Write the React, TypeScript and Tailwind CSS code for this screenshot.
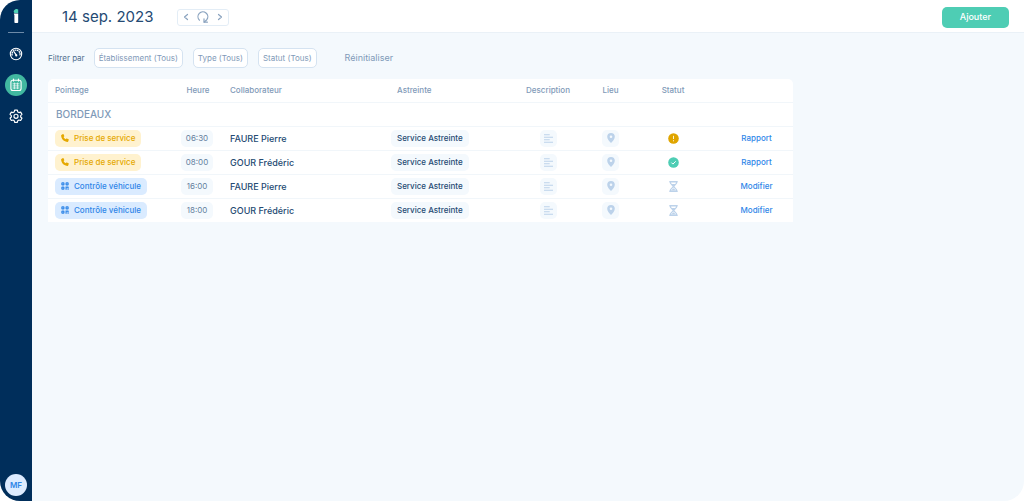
import React, { useState } from "react";

type Status = "warning" | "done" | "pending";

interface Shift {
  id: number;
  kind: "service" | "vehicle";
  time: string;
  name: string;
  onCall: string;
  status: Status;
  action: string;
}

const shifts: Shift[] = [
  { id: 1, kind: "service", time: "06:30", name: "FAURE Pierre", onCall: "Service Astreinte", status: "warning", action: "Rapport" },
  { id: 2, kind: "service", time: "08:00", name: "GOUR Frédéric", onCall: "Service Astreinte", status: "done", action: "Rapport" },
  { id: 3, kind: "vehicle", time: "16:00", name: "FAURE Pierre", onCall: "Service Astreinte", status: "pending", action: "Modifier" },
  { id: 4, kind: "vehicle", time: "18:00", name: "GOUR Frédéric", onCall: "Service Astreinte", status: "pending", action: "Modifier" },
];

const filters = ["Établissement (Tous)", "Type (Tous)", "Statut (Tous)"];

const Logo = () => (
  <svg width="8" height="16" viewBox="0 0 8 16">
    <path d="M2 2.6C2.8 1 5 .6 6.2 1.6V5H2.6C1.6 4.600 1.500 3.400 2 2.600Z" fill="#4fd1b5" />
    <path d="M1.800 5.600H6.200V14.200a.8.8 0 0 1-.8.8H3.200a.8.8 0 0 1-.8-.8V7.200Z" fill="#fff" />
  </svg>
);

const GaugeIcon = () => (
  <svg width="14" height="14" viewBox="0 0 14 14" fill="none" stroke="#fff" strokeLinecap="round">
    <circle cx="7" cy="7" r="5.7" strokeWidth="1.1" />
    <path d="M3.3 8.6a4 4 0 1 1 7.4 0" strokeWidth="1.3" strokeDasharray="1.6 .5" strokeLinecap="butt" />
    <path d="M5.2 5 7.3 8.2" strokeWidth="1.3" />
    <circle cx="7.3" cy="8.4" r="1.1" fill="#fff" stroke="none" />
  </svg>
);

const CalendarIcon = () => (
  <svg width="12" height="14" viewBox="0 0 12 14" fill="none" stroke="#fff" strokeLinecap="round">
    <rect x=".9" y="2.3" width="10.2" height="10.2" rx="2" strokeWidth="1.1" />
    <path d="M3.5 1v2M8.5 1v2" strokeWidth="1.2" />
    <path d="M3 5.8h6M3 7.9h6M3 10h6M4.4 5v5.8M7.6 5v5.8" strokeWidth=".7" />
  </svg>
);

const SettingsIcon = () => (
  <svg width="14" height="14" viewBox="0 0 24 24" fill="none" stroke="#fff" strokeWidth="2" strokeLinejoin="round">
    <path d="M9.7 2h4.6l.7 3 2 1.2 3-.9 2.2 3.9-2.2 2.1v2.4l2.2 2.1-2.2 3.9-3-.9-2 1.2-.7 3H9.7l-.7-3-2-1.2-3 .9-2.2-3.9L4 13.7v-2.4L1.8 9.2 4 5.3l3 .9L9 5Z" />
    <circle cx="12" cy="12.5" r="3.5" />
  </svg>
);

const RefreshIcon = () => (
  <svg width="12" height="12" viewBox="0 0 12 12" fill="none" stroke="#8aa3bf" strokeWidth="1.2" strokeLinecap="round" strokeLinejoin="round">
    <path d="M2.400 9.200A4.900 4.900 0 1 1 9.800 8.700L7.300 11" />
    <path d="M7 7.800v3.400h3.400" />
  </svg>
);

const ChevronIcon = ({ flip = false }: { flip?: boolean }) => (
  <svg width="6" height="8" viewBox="0 0 6 8" fill="none" stroke="#8aa3bf" strokeWidth="1.2" strokeLinecap="round" strokeLinejoin="round">
    <path d={flip ? "M1.5 1.5 4.5 4 1.5 6.5" : "M4.5 1.5 1.5 4 4.5 6.5"} />
  </svg>
);

const PhoneIcon = () => (
  <svg width="8" height="8" viewBox="0 0 8 8" fill="#e5a800">
    <path d="M.4.9 1.9.1c.3-.1.5 0 .6.2l.8 1.6c.1.2 0 .4-.1.6l-.7.6c.4.9 1.2 1.7 2.2 2.2l.6-.7c.2-.2.4-.2.6-.1l1.6.7c.3.1.4.4.3.6l-.6 1.7c-.1.3-.3.4-.5.4C3 7.9.1 5 .1 1.3.1 1.1.2 1 .4.9Z" />
  </svg>
);

const GridIcon = () => (
  <svg width="8" height="8" viewBox="0 0 8 8" fill="none" stroke="#2f86e8" strokeWidth="1.2">
    <rect x=".9" y=".9" width="2" height="2" rx=".4" />
    <rect x="5.1" y=".9" width="2" height="2" rx=".4" />
    <rect x=".9" y="5.1" width="2" height="2" rx=".4" />
    <path d="M4.5 5.1H7.500M5.100 5v2.700M7.100 5v1.200M6.500 7.200h1.200" />
  </svg>
);

const TextIcon = () => (
  <svg width="9" height="9" viewBox="0 0 9 9" stroke="#bcd2ea" strokeWidth="1.1">
    <path d="M0 .7h5.700M0 3.200h9M0 5.700h5.700M0 8.200h9" />
  </svg>
);

const PinIcon = () => (
  <svg width="8" height="10" viewBox="0 0 8 10">
    <path fillRule="evenodd" fill="#bcd2ea" d="M4 0a3.8 3.8 0 0 1 3.8 3.8C7.800 6 5.500 8.600 4 10 2.500 8.600.2 6 .2 3.800A3.800 3.800 0 0 1 4 0Zm0 2.500a1.300 1.300 0 1 0 0 2.600 1.300 1.300 0 0 0 0-2.600Z" />
  </svg>
);

const StatusIcon = ({ status }: { status: Status }) => {
  if (status === "warning") {
    return (
      <svg width="11" height="11" viewBox="0 0 11 11">
        <circle cx="5.5" cy="5.5" r="5.3" fill="#e0a500" />
        <path d="M5.5 2.8v3.2M5.5 7.2v1.1" stroke="#fff3d0" strokeWidth="1" />
      </svg>
    );
  }
  if (status === "done") {
    return (
      <svg width="11" height="11" viewBox="0 0 11 11">
        <circle cx="5.5" cy="5.5" r="5.3" fill="#4ecdb4" />
        <path d="m3.400 5.600 1.500 1.500 2.800-2.800" fill="none" stroke="#fff" strokeWidth="1" />
      </svg>
    );
  }
  return (
    <svg width="9" height="11" viewBox="0 0 9 11" fill="none" stroke="#bcd2ea">
      <path d="M.3.8h8.400M.3 10.200h8.400" strokeWidth="1.500" />
      <path d="M1.500 1v1.300L4.500 5.500l3-3.200V1M1.500 10V8.700L4.500 5.500l3 3.200V10" strokeWidth="1.200" />
      <path d="M2.500 3h4L4.500 5.200ZM2 9.500 4.500 7.300 7 9.500Z" fill="#bcd2ea" stroke="none" />
    </svg>
  );
};

const KindBadge = ({ kind }: { kind: Shift["kind"] }) =>
  kind === "service" ? (
    <span className="inline-flex h-[17px] items-center gap-[5px] rounded-[5px] bg-[#fff2cf] px-1.5 font-medium text-[#e5a800]">
      <PhoneIcon />
      Prise de service
    </span>
  ) : (
    <span className="inline-flex h-[17px] items-center gap-[5px] rounded-[5px] bg-[#daebff] px-1.5 font-medium text-[#2f86e8]">
      <GridIcon />
      Contrôle véhicule
    </span>
  );

const Sidebar = () => (
  <aside className="flex w-8 shrink-0 flex-col items-center bg-[#002e5b] pt-2 pb-[5px]">
    <Logo />
    <div className="mt-2 h-px w-4 bg-[#6d8aa8]" />
    <nav className="mt-2.5 flex flex-col items-center gap-[9px]">
      <a href="#dashboard" aria-label="Tableau de bord" className="flex size-[22px] items-center justify-center rounded-full">
        <GaugeIcon />
      </a>
      <a href="#planning" aria-label="Planning" className="flex size-[22px] items-center justify-center rounded-full bg-[#41b8a0]">
        <CalendarIcon />
      </a>
      <a href="#settings" aria-label="Paramètres" className="flex size-[22px] items-center justify-center rounded-full">
        <SettingsIcon />
      </a>
    </nav>
    <button className="mt-auto flex size-[22px] items-center justify-center rounded-full bg-[#dcebff] text-[8px] font-semibold text-[#2f86e8]">
      MF
    </button>
  </aside>
);

const Header = ({ onRefresh }: { onRefresh: () => void }) => (
  <header className="flex h-[33px] items-center border-b border-[#eaf1f7] bg-white pt-0.5 pr-[15px] pl-[30px]">
    <h1 className="text-[15px] text-[#254a73]">14 sep. 2023</h1>
    <div className="ml-6 flex h-[17px] items-center gap-2 rounded-[3px] border border-[#e3edf6] px-[5px]">
      <button aria-label="Jour précédent">
        <ChevronIcon />
      </button>
      <button aria-label="Aujourd'hui" onClick={onRefresh}>
        <RefreshIcon />
      </button>
      <button aria-label="Jour suivant">
        <ChevronIcon flip />
      </button>
    </div>
    <button className="ml-auto h-[21px] rounded-[5px] bg-[#4ecdb4] px-[18px] text-[9px] font-medium text-white">
      Ajouter
    </button>
  </header>
);

const App: React.FC = () => {
  const [active, setActive] = useState<string | null>(null);

  return (
    <div className="min-h-screen bg-white font-['Inter',sans-serif]">
      <div className="flex min-h-screen overflow-hidden rounded-l-[20px] rounded-br-[20px] bg-[#f4f9fd]">
        <Sidebar />
        <div className="min-w-0 flex-1">
          <Header onRefresh={() => setActive(null)} />
          <main className="px-4 pt-[15px]">
            <div className="flex items-center text-[8px] text-[#7f9ab8]">
              <span className="mr-[9px] text-[#50708f]">Filtrer par</span>
              <div className="flex gap-2.5">
                {filters.map((filter) => (
                  <button
                    key={filter}
                    aria-pressed={active === filter}
                    onClick={() => setActive(filter)}
                    className="h-5 rounded-[5px] border border-[#d5e3f1] bg-white px-1"
                  >
                    {filter}
                  </button>
                ))}
              </div>
              <button onClick={() => setActive(null)} className="ml-7 text-[9px]">
                Réinitialiser
              </button>
            </div>

            <table className="mt-[11px] w-full max-w-[745px] table-fixed overflow-hidden rounded-t-[5px] bg-white text-[8px] leading-none">
              <colgroup>
                <col className="w-[126px]" />
                <col className="w-[46px]" />
                <col className="w-[171px]" />
                <col className="w-[120px]" />
                <col className="w-[74px]" />
                <col className="w-[51px]" />
                <col className="w-[74px]" />
                <col />
              </colgroup>
              <thead>
                <tr className="h-[23px] border-b border-[#f1f6fa] text-left text-[#7f9ab8] *:font-medium">
                  <th className="pl-[7px]">Pointage</th>
                  <th className="pl-0.5 text-center">Heure</th>
                  <th className="pl-2.5">Collaborateur</th>
                  <th className="pl-1.5">Astreinte</th>
                  <th className="text-center">Description</th>
                  <th className="text-center">Lieu</th>
                  <th className="text-center">Statut</th>
                  <td />
                </tr>
              </thead>
              <tbody>
                <tr className="h-6 border-b border-[#f1f6fa]">
                  <th colSpan={8} className="pl-2 text-left text-[10px] font-medium text-[#7f9ab8]">
                    BORDEAUX
                  </th>
                </tr>
                {shifts.map((shift) => (
                  <tr key={shift.id} className="h-6 border-b border-[#f1f6fa] last:border-b-0">
                    <td className="pl-[7px]">
                      <div className="flex">
                        <KindBadge kind={shift.kind} />
                      </div>
                    </td>
                    <td>
                      <div className="mx-auto flex h-[17px] w-8 items-center justify-center rounded-[5px] bg-[#f4f9fd] text-[#64809e]">
                        {shift.time}
                      </div>
                    </td>
                    <td className="pl-2.5 text-[9px] font-medium text-[#254a73]">{shift.name}</td>
                    <td>
                      <div className="flex">
                        <span className="flex h-[17px] items-center rounded-[5px] bg-[#f4f9fd] px-1.5 font-medium text-[#254a73]">
                          {shift.onCall}
                        </span>
                      </div>
                    </td>
                    <td>
                      <button aria-label="Description" className="mx-auto flex size-[17px] items-center justify-center rounded-[5px] bg-[#f4f9fd]">
                        <TextIcon />
                      </button>
                    </td>
                    <td>
                      <button aria-label="Lieu" className="mx-auto flex size-[17px] items-center justify-center rounded-[5px] bg-[#f4f9fd]">
                        <PinIcon />
                      </button>
                    </td>
                    <td>
                      <div className="flex justify-center">
                        <StatusIcon status={shift.status} />
                      </div>
                    </td>
                    <td className="pl-2.5 text-center font-medium text-[#2f86e8]">
                      <a href={`#shift-${shift.id}`}>{shift.action}</a>
                    </td>
                  </tr>
                ))}
              </tbody>
            </table>
          </main>
        </div>
      </div>
    </div>
  );
};

export default App;
